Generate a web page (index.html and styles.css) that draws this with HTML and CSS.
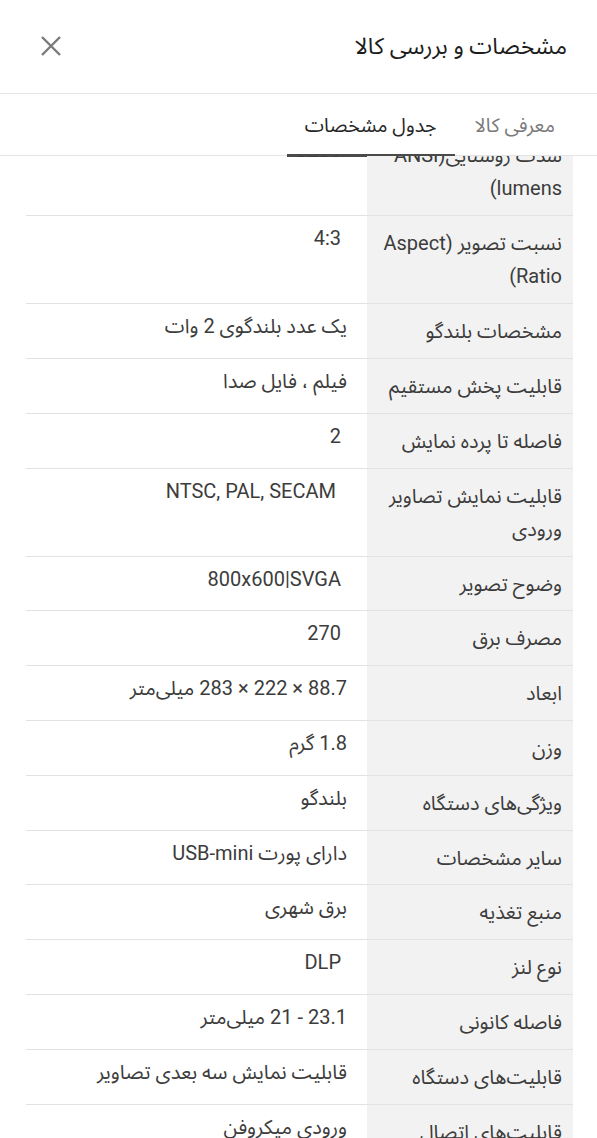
FILE: index.html
```html
<!DOCTYPE html>
<html lang="fa" dir="rtl">
<head>
<meta charset="utf-8">
<title>مشخصات و بررسی کالا</title>
<link rel="stylesheet" href="styles.css">
</head>
<body>
<div class="sheet">
  <header class="top">
    <h1 class="title">مشخصات و بررسی کالا</h1>
    <button class="close" aria-label="بستن">
      <svg width="24" height="24" viewBox="0 0 24 24"><path d="M3 3 L21 21 M21 3 L3 21" stroke="#7a7a7a" stroke-width="2.4" fill="none"/></svg>
    </button>
  </header>
  <nav class="tabs">
    <div class="tab">معرفی کالا</div>
    <div class="tab active">جدول مشخصات</div>
  </nav>
  <div class="viewport">
    <div class="specs">
      <div class="row"><div class="label">شدت روشنایی(ANSI lumens)</div><div class="value en">3200</div></div>
      <div class="row"><div class="label">نسبت تصویر (Aspect Ratio)</div><div class="value en">4:3</div></div>
      <div class="row"><div class="label">مشخصات بلندگو</div><div class="value">یک عدد بلندگوی 2 وات</div></div>
      <div class="row"><div class="label">قابلیت پخش مستقیم</div><div class="value">فیلم ، فایل صدا</div></div>
      <div class="row"><div class="label">فاصله تا پرده نمایش</div><div class="value en">2</div></div>
      <div class="row"><div class="label">قابلیت نمایش تصاویر ورودی</div><div class="value en wide">NTSC, PAL, SECAM</div></div>
      <div class="row"><div class="label">وضوح تصویر</div><div class="value en">800x600|SVGA</div></div>
      <div class="row"><div class="label">مصرف برق</div><div class="value en">270</div></div>
      <div class="row"><div class="label">ابعاد</div><div class="value">88.7 × 222 × 283 میلی‌متر</div></div>
      <div class="row"><div class="label">وزن</div><div class="value">1.8 گرم</div></div>
      <div class="row"><div class="label">ویژگی‌های دستگاه</div><div class="value">بلندگو</div></div>
      <div class="row"><div class="label">سایر مشخصات</div><div class="value">دارای پورت USB-mini</div></div>
      <div class="row"><div class="label">منبع تغذیه</div><div class="value">برق شهری</div></div>
      <div class="row"><div class="label">نوع لنز</div><div class="value en">DLP</div></div>
      <div class="row"><div class="label">فاصله کانونی</div><div class="value">23.1 - 21 میلی‌متر</div></div>
      <div class="row"><div class="label">قابلیت‌های دستگاه</div><div class="value">قابلیت نمایش سه بعدی تصاویر</div></div>
      <div class="row"><div class="label">قابلیت‌های اتصال</div><div class="value">ورودی میکروفن</div></div>
      <div class="row"><div class="label">خروجی‌ها</div><div class="value en">VGA</div></div>
    </div>
  </div>
</div>
</body>
</html>
```

FILE: styles.css
```css
* { box-sizing: border-box; }

html, body {
  margin: 0;
  padding: 0;
  background: #ffffff;
}

body {
  font-family: Roboto, "Noto Sans Arabic", "Noto Naskh Arabic", "DejaVu Sans", sans-serif;
  color: #404040;
  direction: rtl;
}

.sheet {
  width: 597px;
  height: 1138px;
  overflow: hidden;
  display: flex;
  flex-direction: column;
}

.top {
  height: 94px;
  flex: none;
  display: flex;
  align-items: center;
  justify-content: space-between;
  padding: 0 30px 0 39px;
  border-bottom: 1px solid #e4e4e4;
}

.title {
  margin: 0;
  font-size: 23px;
  font-weight: 400;
  color: #1c1c1c;
}

.close {
  border: 0;
  background: none;
  padding: 0;
  width: 24px;
  height: 24px;
  display: flex;
  margin-top: -1px;
}

.tabs {
  height: 62px;
  flex: none;
  display: flex;
  align-items: stretch;
  padding-right: 22px;
  border-bottom: 1px solid #e4e4e4;
}

.tab {
  display: flex;
  align-items: center;
  padding: 2px 20px 0;
  font-size: 19.5px;
  color: #7a7a7a;
  border-bottom: 3px solid transparent;
  margin-bottom: -2px;
}

.tab.active {
  color: #262626;
  border-bottom-color: #4a4a4a;
  padding: 2px 18px 0;
}

.viewport {
  flex: 1;
  overflow: hidden;
}

.specs {
  margin: -28px 24px 0 26px;
}

.row {
  display: grid;
  grid-template-columns: 206px 1fr;
  border-bottom: 1px solid #e2e2e2;
}

.label {
  background: #f2f2f2;
  padding: 11px 11px 9.5px 4px;
  font-size: 20px;
  line-height: 33.3px;
  color: #3c3c3c;
}

.value {
  padding: 6px 20px 10px 10px;
  font-size: 20px;
  line-height: 33px;
  color: #3c3c3c;
}

.value.en {
  padding-right: 26px;
}

.value.en.wide {
  padding-right: 31px;
}
```
